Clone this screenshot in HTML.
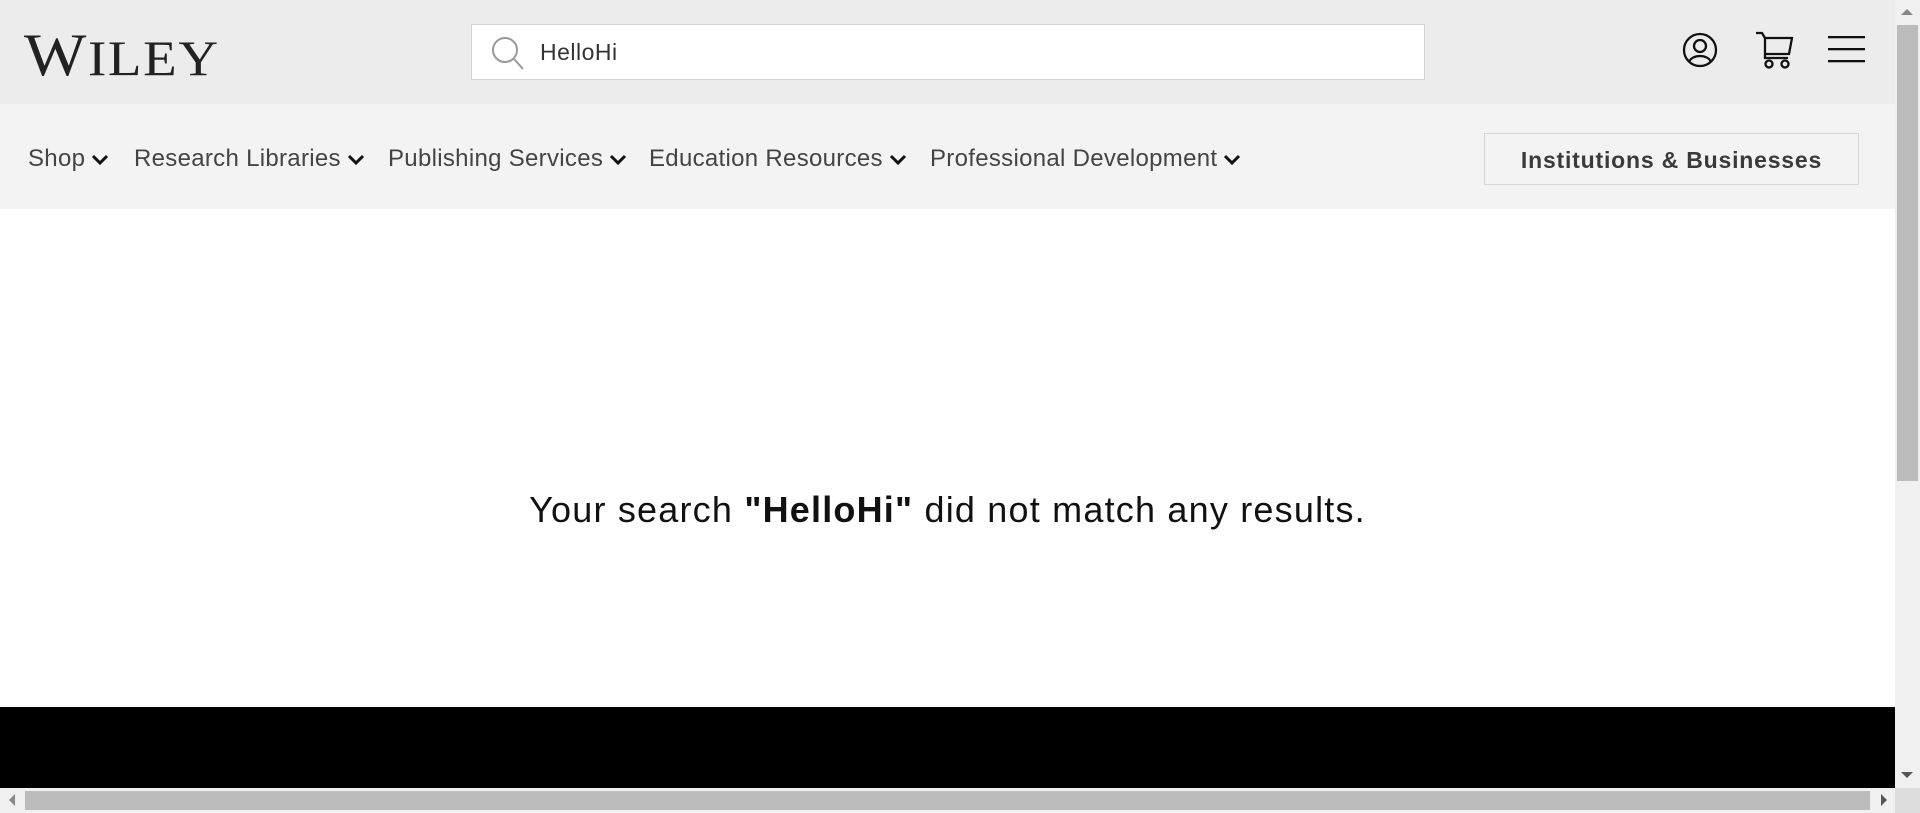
<!DOCTYPE html>
<html><head><meta charset="utf-8"><style>
*{margin:0;padding:0;box-sizing:border-box}
body{width:1920px;height:813px;overflow:hidden;position:relative;background:#fff;font-family:"Liberation Sans",sans-serif;color:#333}
.hdr{position:absolute;left:0;top:0;width:1895px;height:104px;background:#ececec}
.nav{position:absolute;left:0;top:104px;width:1895px;height:105px;background:#f3f3f3}
.logo{position:absolute;left:24px;top:21px;font-family:"Liberation Serif",serif;font-size:60px;color:#222;letter-spacing:1.5px;transform-origin:0 0;transform:scaleX(1.1);white-space:nowrap}
.logo small{font-size:50px}
.search{position:absolute;left:471px;top:24px;width:954px;height:56px;background:#fff;border:1px solid #d0d3d8}
.search span{position:absolute;left:68px;top:14px;font-size:23px;color:#333;letter-spacing:0.5px}
.nv{position:absolute;top:145px;font-size:24px;color:#444;white-space:nowrap;letter-spacing:0.3px}
.nv svg{vertical-align:middle;margin-left:6px}
.btn{position:absolute;left:1484px;top:133px;width:375px;height:52px;border:1px solid #d6d6d6;font-weight:bold;font-size:23px;text-align:center;line-height:52px;color:#3a3a3a;letter-spacing:0.8px}
.msg{position:absolute;left:0;width:1895px;top:489px;text-align:center;font-size:36px;color:#111;letter-spacing:1.2px}
.foot{position:absolute;left:0;top:707px;width:1895px;height:81px;background:#000}
.vs{position:absolute;left:1895px;top:0;width:25px;height:788px;background:#f0f0f0}
.vt{position:absolute;left:1897px;top:25px;width:21px;height:456px;background:#bcbcbc}
.hs{position:absolute;left:0;top:788px;width:1895px;height:25px;background:#f0f0f0}
.ht{position:absolute;left:25px;top:791px;width:1845px;height:19px;background:#bcbcbc}
.cor{position:absolute;left:1895px;top:788px;width:25px;height:25px;background:#dcdcdc}
</style></head><body>
<div class="hdr"></div><div class="nav"></div>
<div class="logo">W<small>ILEY</small></div>
<div class="search">
<svg style="position:absolute;left:18px;top:10px" width="36" height="36" viewBox="0 0 36 36"><circle cx="15" cy="15" r="12" fill="none" stroke="#999" stroke-width="2"/><line x1="24" y1="24" x2="33" y2="34" stroke="#999" stroke-width="2"/></svg>
<span>HelloHi</span></div>
<svg style="position:absolute;left:1682px;top:32px" width="36" height="36" viewBox="0 0 36 36"><circle cx="18" cy="18" r="16" fill="none" stroke="#111" stroke-width="2.3"/><circle cx="18" cy="14" r="6" fill="none" stroke="#111" stroke-width="2.3"/><path d="M7 30 C10 22 26 22 29 30" fill="none" stroke="#111" stroke-width="2.3"/></svg>
<svg style="position:absolute;left:1754px;top:30px" width="40" height="40" viewBox="0 0 40 40"><path d="M2 3 H8 L11 8 V28 H34 M11 8 H38 L35 24 H11" fill="none" stroke="#111" stroke-width="2.3"/><circle cx="15" cy="34" r="3.5" fill="none" stroke="#111" stroke-width="2.3"/><circle cx="31" cy="34" r="3.5" fill="none" stroke="#111" stroke-width="2.3"/></svg>
<svg style="position:absolute;left:1828px;top:35px" width="37" height="30"><rect y="1" width="37" height="2.3" fill="#111"/><rect y="13" width="37" height="2.3" fill="#111"/><rect y="25" width="37" height="2.3" fill="#111"/></svg>
<div class="nv" style="left:28px">Shop<svg width="18" height="12" viewBox="0 0 18 12"><path d="M2 2 L9 9 L16 2" fill="none" stroke="#111" stroke-width="3"/></svg></div>
<div class="nv" style="left:134px">Research Libraries<svg width="18" height="12" viewBox="0 0 18 12"><path d="M2 2 L9 9 L16 2" fill="none" stroke="#111" stroke-width="3"/></svg></div>
<div class="nv" style="left:388px">Publishing Services<svg width="18" height="12" viewBox="0 0 18 12"><path d="M2 2 L9 9 L16 2" fill="none" stroke="#111" stroke-width="3"/></svg></div>
<div class="nv" style="left:649px">Education Resources<svg width="18" height="12" viewBox="0 0 18 12"><path d="M2 2 L9 9 L16 2" fill="none" stroke="#111" stroke-width="3"/></svg></div>
<div class="nv" style="left:930px">Professional Development<svg width="18" height="12" viewBox="0 0 18 12"><path d="M2 2 L9 9 L16 2" fill="none" stroke="#111" stroke-width="3"/></svg></div>
<div class="btn">Institutions &amp; Businesses</div>
<div class="msg">Your search <b>"HelloHi"</b> did not match any results.</div>
<div class="foot"></div>
<div class="vs"></div><div class="vt"></div>
<div class="hs"></div><div class="ht"></div><div class="cor"></div>
<svg style="position:absolute;left:1901px;top:8px" width="12" height="8"><path d="M0 7 L6 1 L12 7Z" fill="#888"/></svg>
<svg style="position:absolute;left:1901px;top:771px" width="12" height="8"><path d="M0 1 L6 7 L12 1Z" fill="#555"/></svg>
<svg style="position:absolute;left:8px;top:794px" width="8" height="12"><path d="M7 0 L1 6 L7 12Z" fill="#888"/></svg>
<svg style="position:absolute;left:1880px;top:794px" width="8" height="12"><path d="M1 0 L7 6 L1 12Z" fill="#555"/></svg>
</body></html>
